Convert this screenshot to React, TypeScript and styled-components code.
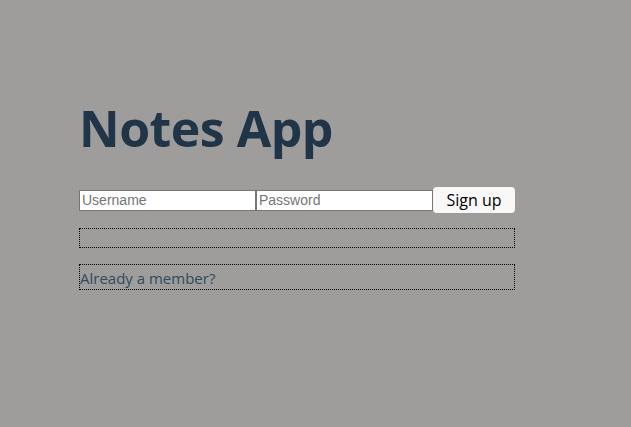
import * as React from 'react'
import styled, { createGlobalStyle } from 'styled-components'

const GlobalStyle = createGlobalStyle`
  html, body {
    margin: 0;
    padding: 0;
    background: #9e9d9b;
    font-family: "Open Sans", "Noto Sans", sans-serif;
  }
`

const Page = styled.div`
  width: 631px;
  height: 427px;
  padding: 96px 0 0 79px;
  box-sizing: border-box;
`

const Container = styled.div`
  width: 436px;
  display: flex;
  flex-direction: column;
`

const Title = styled.h1`
  margin: 0;
  font-size: 50px;
  line-height: 64px;
  font-weight: 700;
  color: #213548;
  letter-spacing: -0.5px;
`

const Form = styled.form`
  margin-top: 27px;
  display: flex;
  align-items: center;
`

const Input = styled.input`
  width: 177px;
  height: 21px;
  box-sizing: border-box;
  border: 1px solid #767676;
  padding: 1px 2px;
  font-family: "Liberation Sans", Arial, sans-serif;
  font-size: 14px;
  background: #fff;
  color: #000;
  outline: none;

  &::placeholder {
    color: #757575;
  }
`

const Button = styled.button`
  width: 82px;
  height: 26px;
  box-sizing: border-box;
  border: none;
  border-radius: 4px;
  background: #f8f8f8;
  font-family: "Open Sans", "Noto Sans", sans-serif;
  font-size: 16px;
  color: #000;
  padding: 0;
`

const Box = styled.div<{ height: number; top: number }>`
  margin-top: ${({ top }) => top}px;
  height: ${({ height }) => height}px;
  box-sizing: border-box;
  border: 1px dotted #000;
  display: flex;
  align-items: center;
  font-size: 15px;
  color: #2d4b5f;
`

const Link = styled.span`
  line-height: 22px;
  margin-top: 1px;
`

export default function App() {
  return (
    <>
      <GlobalStyle />
      <Page>
        <Container>
          <Title>Notes App</Title>
          <Form onSubmit={(e) => e.preventDefault()}>
            <Input placeholder="Username" />
            <Input placeholder="Password" type="password" />
            <Button type="submit">Sign up</Button>
          </Form>
          <Box top={15} height={20} />
          <Box top={16} height={26}>
            <Link>Already a member?</Link>
          </Box>
        </Container>
      </Page>
    </>
  )
}
